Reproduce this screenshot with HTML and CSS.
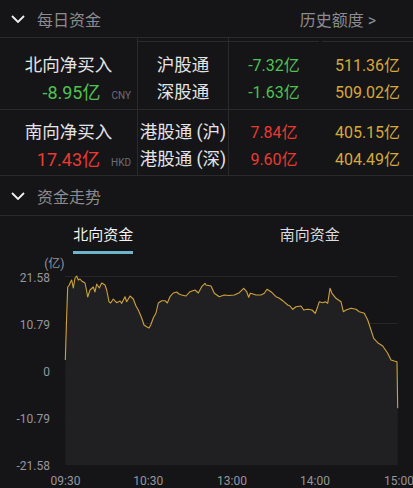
FILE: index.html
```html
<!DOCTYPE html>
<html lang="zh">
<head>
  <meta charset="UTF-8" />
  <title>每日资金</title>
  <meta name="viewport" content="width=device-width, initial-scale=1.0" />
  <link rel="stylesheet" href="styles.css">
</head>
<body>
  <div class="bar">
    <svg class="chev" width="14" height="8" viewBox="0 0 14 8"><polyline points="1,1 7,7 13,1" /></svg>
    <span class="bar-title">每日资金</span>
    <span class="bar-link">历史额度 &gt;</span>
  </div>

  <div class="group north">
    <div class="net">
      <div class="net-label">北向净买入</div>
      <div class="net-value"><span class="down">-8.95亿</span><span class="cur">CNY</span></div>
    </div>
    <div class="col name">
      <div class="head"></div>
      <div class="item">沪股通</div>
      <div class="item">深股通</div>
    </div>
    <div class="col">
      <div class="head"></div>
      <div class="item num down">-7.32亿</div>
      <div class="item num down">-1.63亿</div>
    </div>
    <div class="col quota">
      <div class="head"></div>
      <div class="item num">511.36亿</div>
      <div class="item num">509.02亿</div>
    </div>
  </div>

  <div class="group south">
    <div class="net">
      <div class="net-label">南向净买入</div>
      <div class="net-value"><span class="up">17.43亿</span><span class="cur">HKD</span></div>
    </div>
    <div class="col name">
      <div class="item">港股通 (沪)</div>
      <div class="item">港股通 (深)</div>
    </div>
    <div class="col">
      <div class="item num up">7.84亿</div>
      <div class="item num up">9.60亿</div>
    </div>
    <div class="col quota">
      <div class="item num">405.15亿</div>
      <div class="item num">404.49亿</div>
    </div>
  </div>

  <div class="bar sub">
    <svg class="chev" width="14" height="8" viewBox="0 0 14 8"><polyline points="1,1 7,7 13,1" /></svg>
    <span class="bar-title">资金走势</span>
  </div>

  <div class="tabs">
    <div class="tab"><span class="active">北向资金</span></div>
    <div class="tab"><span>南向资金</span></div>
  </div>

  <svg class="chart" width="413" height="234" viewBox="0 254 413 234">
    <g class="grid">
      <line x1="65" y1="276.5" x2="398" y2="276.5" />
      <line x1="65" y1="323.5" x2="398" y2="323.5" />
      <line x1="65" y1="370.5" x2="398" y2="370.5" />
      <line x1="65" y1="417.5" x2="398" y2="417.5" />
    </g>
    <polygon id="area" class="area" points="" />
    <polyline id="flow" class="flow" points="" />
    <g class="axis">
      <text x="64.5" y="268" text-anchor="end">(亿)</text>
      <text x="50" y="281.5" text-anchor="end">21.58</text>
      <text x="50" y="328.5" text-anchor="end">10.79</text>
      <text x="50" y="376" text-anchor="end">0</text>
      <text x="50" y="423" text-anchor="end">-10.79</text>
      <text x="50" y="470" text-anchor="end">-21.58</text>
      <text x="65.5" y="485" text-anchor="middle">09:30</text>
      <text x="148.3" y="485" text-anchor="middle">10:30</text>
      <text x="232" y="485" text-anchor="middle">13:00</text>
      <text x="315" y="485" text-anchor="middle">14:00</text>
      <text x="399" y="485" text-anchor="middle">15:00</text>
    </g>
  </svg>

  <script>
    // 北向资金 intraday, in page coords
    const pts = [
      [65.3,360],[66.7,315],[67.7,287],[69.3,285],[70.5,282],[71.7,280],[73.3,288],[75,278],
      [76.7,276],[78.3,280],[80,279],[81.7,281],[85,283],[86.5,290],[87.7,297],[90,290],
      [93.3,287],[95,292],[96.7,284],[99.3,288],[101.7,283],[105,285],[106.7,290],[109,301.7],
      [110.7,303],[113.3,299],[115,301],[116.7,302.7],[120,301],[121.7,303.3],[125,296.7],
      [126.7,301.7],[130,296],[133.3,299],[136,306],[138.3,310],[141.7,318],[144,325],
      [146.7,326.7],[149,328],[150.7,325],[153.3,318],[156,313],[158.3,303],[161.7,300.7],
      [165,300.7],[167.3,303],[170,296.7],[173.3,293],[176.7,292],[179,294],[181.7,295],
      [186,296],[190,291.7],[195,290],[198.3,293],[201.7,286.7],[205,283.3],[206,285],
      [211,286],[214.3,293.3],[219.3,296.7],[224.3,295],[229,295.5],[234.3,295],[239.3,292.7],
      [243.7,288.3],[246.7,291.7],[248.7,297.3],[250.3,293.3],[253,294],[256,295],[261,295],
      [264.3,293.3],[267,289.3],[271,291.7],[276,296.7],[279,298],[282.7,300.7],[287.7,305],
      [290,306],[292.7,309.3],[296,306.7],[301,306],[303.7,310],[307.7,309.3],[312,310],
      [315.3,313.3],[317.7,306.7],[319.3,301.7],[322.7,302.7],[325.3,301.7],[327.7,303.3],
      [330,288.3],[332,293.3],[336,298.3],[341,301.7],[343.3,311.7],[346,310],[351,308.3],
      [356,309.3],[359.3,311.7],[364.3,313.3],[367.7,320],[371,330],[373.7,338.3],[377.7,342.7],
      [382.7,346],[387.7,353.3],[391,360],[394.3,361],[397,361.7],[397.7,408.3]
    ];
    const line = pts.map(p => p.join(',')).join(' ');
    document.getElementById('flow').setAttribute('points', line);
    document.getElementById('area').setAttribute('points', line + ' 397.7,465 65.3,465');
  </script>
</body>
</html>
```

FILE: styles.css
```css
html, body {
  margin: 0;
  padding: 0;
  background: #151518;
  color: #e4e4e6;
  font-family: Roboto, "Noto Sans CJK SC", sans-serif;
  overflow: hidden;
}

.bar {
  display: flex;
  align-items: center;
  height: 37px;
  padding-left: 11px;
  border-bottom: 1px solid #2a2a2e;
}

.bar.sub {
  height: 39px;
}

.chev {
  display: block;
  fill: none;
  stroke: #f0f0f0;
  stroke-width: 1.8;
}

.bar-title {
  margin-left: 12px;
  font-size: 16px;
  color: #8b8b90;
}

.bar-link {
  margin-left: auto;
  padding-right: 37px;
  font-size: 16px;
  color: #8b8b90;
}

.group {
  display: flex;
  border-bottom: 1px solid #2a2a2e;
}

.north { height: 71px; }
.south { height: 65px; }

.net {
  width: 138px;
  box-sizing: border-box;
  border-right: 1px solid #2a2a2e;
  padding-right: 6px;
}

.north .net { padding-top: 14px; }
.south .net { padding-top: 9px; }

.net-label {
  height: 27px;
  line-height: 27px;
  font-size: 17.5px;
  text-align: center;
  padding-left: 6px;
}

.net-value {
  height: 27px;
  line-height: 27px;
  font-size: 18px;
  text-align: right;
}

.cur {
  margin-left: 11px;
  font-size: 10px;
  color: #6e6e74;
}

.col {
  width: 90px;
  display: flex;
  flex-direction: column;
}

.col.name {
  width: 91px;
  box-sizing: border-box;
  border-right: 1px solid #2a2a2e;
}

.col.quota {
  flex: 1;
  padding-left: 3px;
  color: #d7a83c;
}

.head {
  height: 3px;
  border-bottom: 1px solid #2a2a2e;
  margin-bottom: 10px;
}

.south .col { padding-top: 9px; }

.item {
  height: 27px;
  line-height: 27px;
  text-align: center;
  white-space: nowrap;
  font-size: 17.5px;
}

.item.num { font-size: 16px; }

.down { color: #4fc152; }
.up { color: #ea3a30; }

.tabs {
  display: flex;
  height: 38px;
}

.tab {
  flex: 1;
  text-align: center;
}

.tab span {
  display: inline-block;
  padding-top: 9px;
  line-height: 20px;
  padding-bottom: 6px;
  font-size: 15px;
  color: #dcdcde;
  border-bottom: 3px solid transparent;
}

.tab span.active {
  color: #f2f2f2;
  border-bottom-color: #6db5cc;
}

.chart {
  display: block;
}

.grid line {
  stroke: #26262a;
  stroke-width: 1;
}

.area {
  fill: #202022;
}

.flow {
  fill: none;
  stroke: #cda23b;
  stroke-width: 1.1;
  stroke-linejoin: round;
}

.axis text {
  font-family: Roboto, "Noto Sans CJK SC", sans-serif;
  font-size: 12px;
  fill: #96969c;
}
```
